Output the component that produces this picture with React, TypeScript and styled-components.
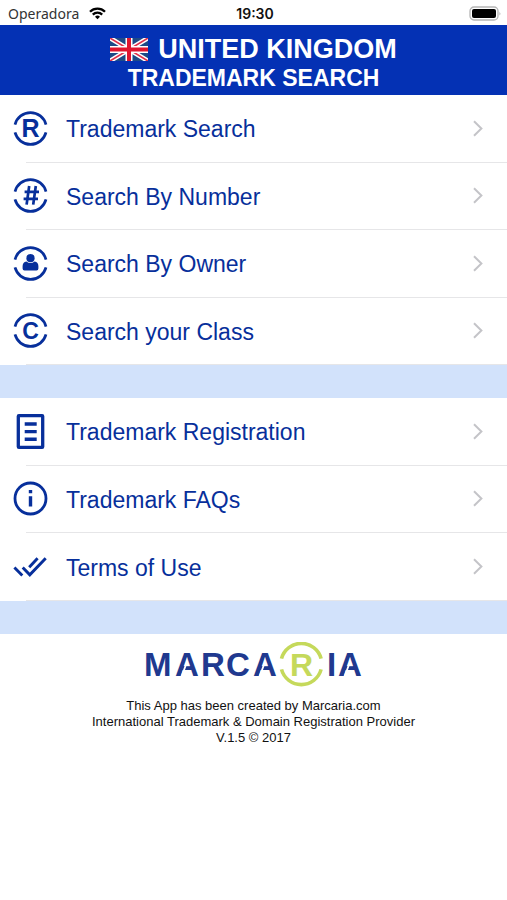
import React from "react";
import styled, { createGlobalStyle } from "styled-components";

const NAVY = "#072f9b";

const GlobalStyle = createGlobalStyle`
  *, *::before, *::after { box-sizing: border-box; }
  body {
    margin: 0;
    background: #fff;
    color: #111;
    font-family: "Liberation Sans", Arial, sans-serif;
  }
`;

const Screen = styled.div`
  min-height: 100vh;
  display: flex;
  flex-direction: column;
`;

const StatusBar = styled.div`
  display: grid;
  grid-template-columns: 1fr auto 1fr;
  align-items: center;
  height: 25px;
  padding: 2px 5px 0 8px;
  font-family: Inter, "Liberation Sans", sans-serif;
  font-size: 14px;
  line-height: 20px;
`;

const Carrier = styled.span`
  display: flex;
  align-items: center;
  gap: 10px;
  font-family: "Noto Sans", sans-serif;
  color: #333;
`;

const Clock = styled.time`
  font-weight: 600;
`;

const BatteryIcon = styled.svg`
  justify-self: end;
`;

const Header = styled.header`
  display: flex;
  flex-direction: column;
  align-items: center;
  min-height: 70px;
  padding-top: 9px;
  background: #0431b4;
  color: #fff;
`;

const Country = styled.h1`
  display: flex;
  align-items: center;
  gap: 10px;
  margin: 0;
  font-size: 27px;
  line-height: 30px;
`;

const Subtitle = styled.h2`
  margin: 0;
  font-size: 23px;
  line-height: 28px;
`;

const Menu = styled.ul<{ $height: number }>`
  display: grid;
  grid-auto-rows: 1fr;
  min-height: ${(p) => p.$height}px;
  margin: 0;
  padding: 0;
  list-style: none;
`;

const MenuItem = styled.li`
  display: flex;
  flex-direction: column;

  &::after {
    content: "";
    height: 1px;
    margin-left: 26px;
    background: #e6e6e8;
  }
`;

const MenuLink = styled.a`
  flex: 1;
  display: flex;
  align-items: center;
  gap: 18px;
  padding: 0 24px 0 13px;
  color: ${NAVY};
  font-size: 23px;
  line-height: 28px;
  text-decoration: none;
`;

const Label = styled.span`
  flex: 1;
  padding-top: 2px;
`;

const Band = styled.div`
  height: 33px;
  background: #d2e2fb;
`;

const Footer = styled.footer`
  display: flex;
  flex-direction: column;
  align-items: center;
  padding-top: 8px;
`;

const Credits = styled.p`
  margin: 11px 0 0;
  font-size: 13px;
  line-height: 16px;
  text-align: center;
`;

const Glyph = styled.text`
  font-family: "Liberation Sans", Arial, sans-serif;
  font-weight: 700;
`;

function Wifi() {
  return (
    <svg width="17" height="13" viewBox="0 0 17 13" fill="none" stroke="#000" strokeWidth="2.3" aria-label="Wi-Fi">
      <path d="M1 4.7a10.6 10.6 0 0 1 15 0" />
      <path d="M3.8 7.6a6.7 6.7 0 0 1 9.4 0" />
      <path d="M8.5 12.2 6 9.7a3.6 3.6 0 0 1 5 0Z" fill="#000" stroke="none" />
    </svg>
  );
}

function Battery() {
  return (
    <BatteryIcon width="33" height="15" viewBox="0 0 33 15" aria-label="Battery full">
      <rect x="1" y="1" width="28" height="13" rx="4" fill="#fff" stroke="#b5b5b5" strokeWidth="1.3" />
      <rect x="3" y="3" width="24" height="9" rx="2" fill="#000" />
      <path d="M30.5 5.5q1.6 2 0 4Z" fill="#aaa" />
    </BatteryIcon>
  );
}

function Flag() {
  return (
    <svg width="38" height="23" viewBox="0 0 38 23" aria-label="United Kingdom flag">
      <rect width="38" height="23" fill="#1d4a86" />
      <path d="M0 0 38 23M38 0 0 23" stroke="#fff" strokeWidth="4.6" />
      <path d="M0 0 38 23M38 0 0 23" stroke="#e0304a" strokeWidth="1.6" />
      <path d="M19 0v23M0 11.5h38" stroke="#fff" strokeWidth="7" />
      <path d="M19 0v23M0 11.5h38" stroke="#e0152f" strokeWidth="4" />
    </svg>
  );
}

function Ring() {
  return (
    <path
      d="M2 13.6a16 16 0 0 1 31 0M2 21.4a16 16 0 0 0 31 0"
      fill="none"
      stroke={NAVY}
      strokeWidth="2.7"
    />
  );
}

type IconName = "R" | "hash" | "C" | "owner" | "document" | "info" | "checks";

function MenuIcon({ name }: { name: IconName }) {
  return (
    <svg width="35" height="35" viewBox="0 0 35 35" fill="none" aria-hidden="true">
      {(name === "R" || name === "C") && (
        <>
          <Ring />
          <Glyph x="17.5" y={name === "R" ? 26 : 25.5} textAnchor="middle" fontSize={name === "R" ? 25 : 23} fill={NAVY}>
            {name}
          </Glyph>
        </>
      )}
      {name === "hash" && (
        <>
          <Ring />
          <path d="M16.2 8 13.6 26.6M22.8 8 20.2 26.6M11.6 13.8H26M10.6 20.8H25" stroke={NAVY} strokeWidth="2.7" />
        </>
      )}
      {name === "owner" && (
        <>
          <Ring />
          <circle cx="17.5" cy="12.2" r="4.1" fill={NAVY} />
          <path
            d="M13.4 15.4q4.1 3 8.2 0 3.8.8 3.8 4.8v2.4q0 1.9-1.9 1.9H11.5q-1.9 0-1.9-1.9v-2.4q0-4 3.8-4.8Z"
            fill={NAVY}
          />
        </>
      )}
      {name === "document" && (
        <>
          <rect x="5.3" y="1.7" width="24.4" height="31.6" rx="0.6" stroke={NAVY} strokeWidth="3.3" />
          <path d="M11.7 10h12M11.7 17.6h12M11.7 25.2h12" stroke={NAVY} strokeWidth="3.4" />
        </>
      )}
      {name === "info" && (
        <>
          <circle cx="17.5" cy="17.5" r="15.5" stroke={NAVY} strokeWidth="2.8" />
          <path d="M17.5 9v3.2M17.5 15.2v10.4" stroke={NAVY} strokeWidth="3.4" />
        </>
      )}
      {name === "checks" && (
        <path
          d="M1.4 18.4 9.3 26.4M9.7 18.4 16.8 25.8 32.7 9.2M16.2 18.2 24.6 9.2"
          stroke={NAVY}
          strokeWidth="2.9"
        />
      )}
    </svg>
  );
}

function Chevron() {
  return (
    <svg width="10" height="17" viewBox="0 0 10 17" fill="none" stroke="#c4c4c8" strokeWidth="2" aria-hidden="true">
      <path d="M1 1.2 8.4 8.5 1 15.8" />
    </svg>
  );
}

function Logo() {
  return (
    <svg width="218" height="45" viewBox="0 0 218 45" role="img" aria-label="Marcaria">
      <Glyph x="-1 30 56 81 108" y="34" fontSize="33" fill="#20398f">
        MARCA
      </Glyph>
      <Glyph x="182 193" y="34" fontSize="33" fill="#20398f">
        IA
      </Glyph>
      <Glyph x="145" y="34" fontSize="32" fill="#c5d95b">
        R
      </Glyph>
      <path d="M136.5 16.6a20.5 20.5 0 0 1 39.6 0M136.5 27.4a20.5 20.5 0 0 0 39.6 0" fill="none" stroke="#c5d95b" strokeWidth="3.6" />
      <path d="M36.6 34.6 41.4 21.5M114.6 34.6 119.4 21.5M199.6 34.6 204.4 21.5" stroke="#fff" strokeWidth="1.8" />
    </svg>
  );
}

type Entry = { icon: IconName; label: string };

const searchEntries: Entry[] = [
  { icon: "R", label: "Trademark Search" },
  { icon: "hash", label: "Search By Number" },
  { icon: "owner", label: "Search By Owner" },
  { icon: "C", label: "Search your Class" },
];

const infoEntries: Entry[] = [
  { icon: "document", label: "Trademark Registration" },
  { icon: "info", label: "Trademark FAQs" },
  { icon: "checks", label: "Terms of Use" },
];

function MenuList({ entries, height }: { entries: Entry[]; height: number }) {
  return (
    <Menu $height={height}>
      {entries.map((entry) => (
        <MenuItem key={entry.label}>
          <MenuLink href="#">
            <MenuIcon name={entry.icon} />
            <Label>{entry.label}</Label>
            <Chevron />
          </MenuLink>
        </MenuItem>
      ))}
    </Menu>
  );
}

export default function App() {
  return (
    <Screen>
      <GlobalStyle />
      <StatusBar>
        <Carrier>
          Operadora
          <Wifi />
        </Carrier>
        <Clock>19:30</Clock>
        <Battery />
      </StatusBar>
      <Header>
        <Country>
          <Flag />
          UNITED KINGDOM
        </Country>
        <Subtitle>TRADEMARK SEARCH</Subtitle>
      </Header>
      <main>
        <MenuList entries={searchEntries} height={270} />
        <Band />
        <MenuList entries={infoEntries} height={203} />
        <Band />
      </main>
      <Footer>
        <Logo />
        <Credits>
          This App has been created by Marcaria.com
          <br />
          International Trademark &amp; Domain Registration Provider
          <br />
          V.1.5 © 2017
        </Credits>
      </Footer>
    </Screen>
  );
}
